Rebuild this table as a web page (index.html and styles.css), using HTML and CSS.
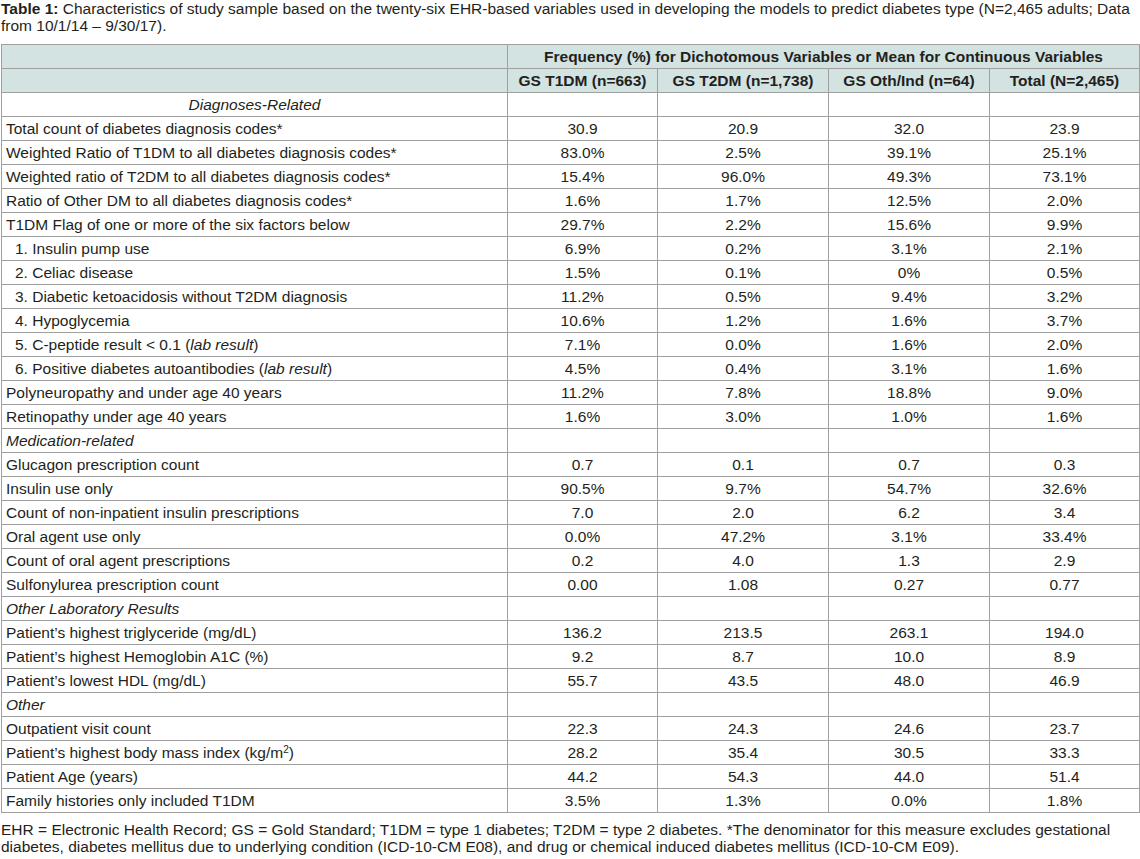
FILE: index.html
```html
<!DOCTYPE html>
<html>
<head>
<meta charset="utf-8">
<link rel="stylesheet" href="styles.css">
</head>
<body>
<div class="page">
<p class="caption"><b>Table 1:</b> Characteristics of study sample based on the twenty-six EHR-based variables used in developing the models to predict diabetes type (N=2,465 adults; Data from 10/1/14 – 9/30/17).</p>
<table class="data">
<colgroup>
<col class="c1"><col class="c2"><col class="c3"><col class="c4"><col class="c5">
</colgroup>
<thead>
<tr><th></th><th colspan="4">Frequency (%) for Dichotomous Variables or Mean for Continuous Variables</th></tr>
<tr><th></th><th>GS T1DM (n=663)</th><th>GS T2DM (n=1,738)</th><th>GS Oth/Ind (n=64)</th><th>Total (N=2,465)</th></tr>
</thead>
<tbody>
<tr><td class="cat center">Diagnoses-Related</td><td></td><td></td><td></td><td></td></tr>
<tr><td>Total count of diabetes diagnosis codes*</td><td>30.9</td><td>20.9</td><td>32.0</td><td>23.9</td></tr>
<tr><td>Weighted Ratio of T1DM to all diabetes diagnosis codes*</td><td>83.0%</td><td>2.5%</td><td>39.1%</td><td>25.1%</td></tr>
<tr><td>Weighted ratio of T2DM to all diabetes diagnosis codes*</td><td>15.4%</td><td>96.0%</td><td>49.3%</td><td>73.1%</td></tr>
<tr><td>Ratio of Other DM to all diabetes diagnosis codes*</td><td>1.6%</td><td>1.7%</td><td>12.5%</td><td>2.0%</td></tr>
<tr><td>T1DM Flag of one or more of the six factors below</td><td>29.7%</td><td>2.2%</td><td>15.6%</td><td>9.9%</td></tr>
<tr><td class="sub">1. Insulin pump use</td><td>6.9%</td><td>0.2%</td><td>3.1%</td><td>2.1%</td></tr>
<tr><td class="sub">2. Celiac disease</td><td>1.5%</td><td>0.1%</td><td>0%</td><td>0.5%</td></tr>
<tr><td class="sub">3. Diabetic ketoacidosis without T2DM diagnosis</td><td>11.2%</td><td>0.5%</td><td>9.4%</td><td>3.2%</td></tr>
<tr><td class="sub">4. Hypoglycemia</td><td>10.6%</td><td>1.2%</td><td>1.6%</td><td>3.7%</td></tr>
<tr><td class="sub">5. C-peptide result &lt; 0.1 (<i>lab result</i>)</td><td>7.1%</td><td>0.0%</td><td>1.6%</td><td>2.0%</td></tr>
<tr><td class="sub">6. Positive diabetes autoantibodies (<i>lab result</i>)</td><td>4.5%</td><td>0.4%</td><td>3.1%</td><td>1.6%</td></tr>
<tr><td>Polyneuropathy and under age 40 years</td><td>11.2%</td><td>7.8%</td><td>18.8%</td><td>9.0%</td></tr>
<tr><td>Retinopathy under age 40 years</td><td>1.6%</td><td>3.0%</td><td>1.0%</td><td>1.6%</td></tr>
<tr><td class="cat">Medication-related</td><td></td><td></td><td></td><td></td></tr>
<tr><td>Glucagon prescription count</td><td>0.7</td><td>0.1</td><td>0.7</td><td>0.3</td></tr>
<tr><td>Insulin use only</td><td>90.5%</td><td>9.7%</td><td>54.7%</td><td>32.6%</td></tr>
<tr><td>Count of non-inpatient insulin prescriptions</td><td>7.0</td><td>2.0</td><td>6.2</td><td>3.4</td></tr>
<tr><td>Oral agent use only</td><td>0.0%</td><td>47.2%</td><td>3.1%</td><td>33.4%</td></tr>
<tr><td>Count of oral agent prescriptions</td><td>0.2</td><td>4.0</td><td>1.3</td><td>2.9</td></tr>
<tr><td>Sulfonylurea prescription count</td><td>0.00</td><td>1.08</td><td>0.27</td><td>0.77</td></tr>
<tr><td class="cat">Other Laboratory Results</td><td></td><td></td><td></td><td></td></tr>
<tr><td>Patient’s highest triglyceride (mg/dL)</td><td>136.2</td><td>213.5</td><td>263.1</td><td>194.0</td></tr>
<tr><td>Patient’s highest Hemoglobin A1C (%)</td><td>9.2</td><td>8.7</td><td>10.0</td><td>8.9</td></tr>
<tr><td>Patient’s lowest HDL (mg/dL)</td><td>55.7</td><td>43.5</td><td>48.0</td><td>46.9</td></tr>
<tr><td class="cat">Other</td><td></td><td></td><td></td><td></td></tr>
<tr><td>Outpatient visit count</td><td>22.3</td><td>24.3</td><td>24.6</td><td>23.7</td></tr>
<tr><td>Patient’s highest body mass index (kg/m<sup>2</sup>)</td><td>28.2</td><td>35.4</td><td>30.5</td><td>33.3</td></tr>
<tr><td>Patient Age (years)</td><td>44.2</td><td>54.3</td><td>44.0</td><td>51.4</td></tr>
<tr><td>Family histories only included T1DM</td><td>3.5%</td><td>1.3%</td><td>0.0%</td><td>1.8%</td></tr>
</tbody>
</table>
<p class="note">EHR = Electronic Health Record; GS = Gold Standard; T1DM = type 1 diabetes; T2DM = type 2 diabetes. *The denominator for this measure excludes gestational diabetes, diabetes mellitus due to underlying condition (ICD-10-CM E08), and drug or chemical induced diabetes mellitus (ICD-10-CM E09).</p>
</div>
</body>
</html>
```

FILE: styles.css
```css
html, body {
  margin: 0;
  padding: 0;
  background: #ffffff;
}

.page {
  padding: 0 1px 0 1px;
  font-family: "Liberation Sans", Arial, sans-serif;
  font-size: 15.5px;
  color: #231f20;
}

.caption {
  margin: 0 0 10px 0;
  line-height: 17px;
  padding-right: 2px;
}

.data {
  border-collapse: collapse;
  width: 1138px;
  table-layout: fixed;
  line-height: 16px;
}

.c1 { width: 506px; }
.c2 { width: 150px; }
.c3 { width: 171px; }
.c4 { width: 161px; }
.c5 { width: 150px; }

.data th,
.data td {
  border: 1px solid #a0a0a0;
  height: 24px;
  padding: 0 4px;
  text-align: center;
  vertical-align: middle;
  box-sizing: border-box;
}

.data th {
  background: #d3e3e2;
  font-weight: bold;
}

.data td:first-child {
  text-align: left;
}

.data td.center {
  text-align: center;
}

.data td.cat {
  font-style: italic;
}

.data td.sub {
  padding-left: 13px;
}

sup {
  font-size: 10px;
  line-height: 0;
  vertical-align: 5px;
}

.note {
  margin: 8px 0 0 0;
  line-height: 17px;
  padding-right: 0;
}
```
